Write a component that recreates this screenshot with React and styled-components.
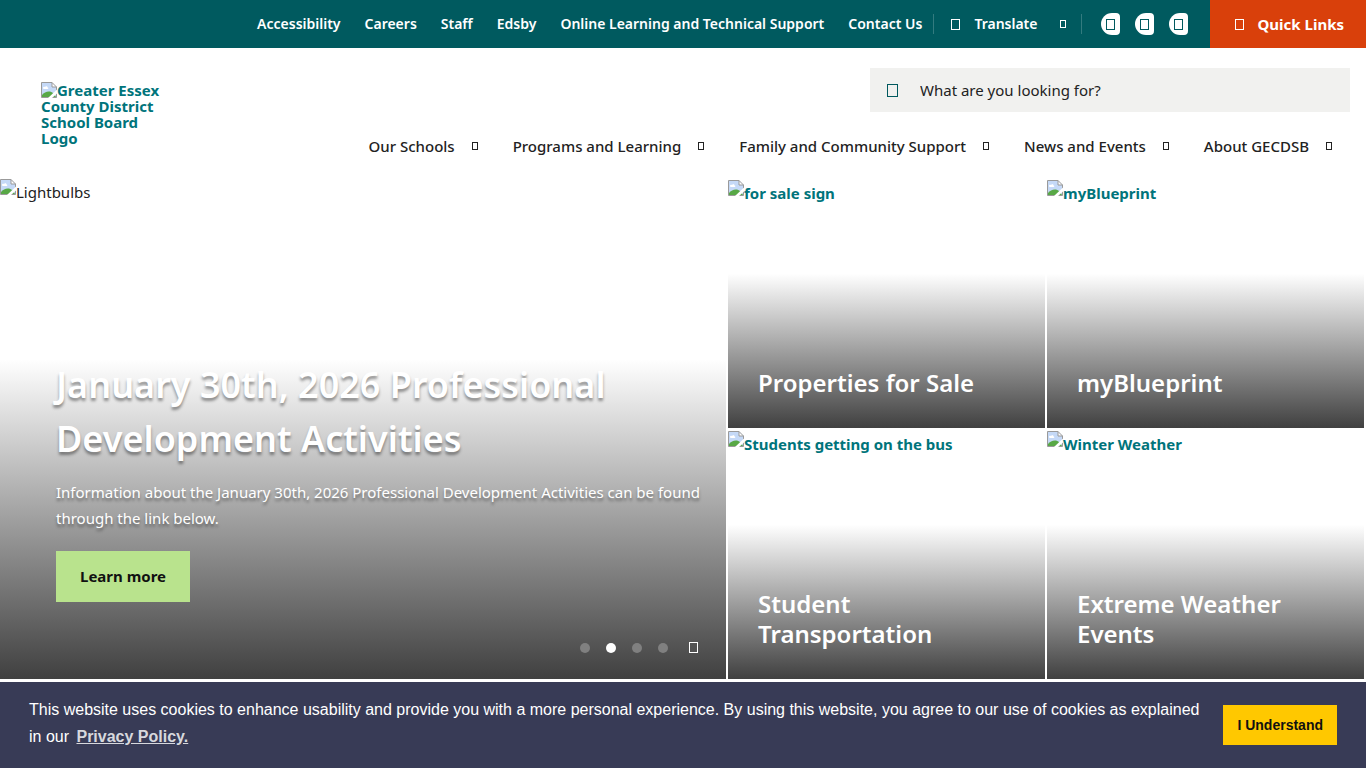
import React from "react";
import styled, { createGlobalStyle } from "styled-components";

const GlobalStyle = createGlobalStyle`
  *, *::before, *::after { box-sizing: border-box; }
  body {
    margin: 0;
    background: #fff;
    color: #222;
    font-family: "Noto Sans", "Open Sans", sans-serif;
    font-size: 15px;
    line-height: 26px;
  }
  button, input { font: inherit; color: inherit; }
  a { color: inherit; text-decoration: none; }
  h1, h2, p, ul { margin: 0; padding: 0; }
`;

const Page = styled.div`
  display: flex;
  flex-direction: column;
  min-height: 100vh;
`;

const TopBar = styled.div`
  display: flex;
  justify-content: flex-end;
  align-items: center;
  height: 48px;
  background: #005a5f;
  color: #fff;
  font-size: 14px;
  font-weight: 600;
`;

const TopLinks = styled.ul`
  display: flex;
  gap: 24px;
  padding-right: 11px;
  list-style: none;
  white-space: nowrap;
`;

const TranslateButton = styled.button`
  display: flex;
  align-items: center;
  height: 20px;
  padding: 0 15px 0 17px;
  border: solid #337b7f;
  border-width: 0 1px;
  background: none;
`;

const TranslateLabel = styled.span`
  margin: 0 22px 0 14px;
`;

const SocialLinks = styled.ul`
  display: flex;
  gap: 15px;
  padding: 0 22px 0 19px;
  list-style: none;
`;

const SocialLink = styled.a`
  display: flex;
  align-items: center;
  justify-content: center;
  width: 19px;
  height: 22px;
  overflow: hidden;
  border-radius: 11px 4px 4px 11px;
  background: #fff;
  color: #005a5f;
`;

const QuickLinks = styled.button`
  display: flex;
  align-items: center;
  gap: 14px;
  height: 48px;
  padding: 0 22px 0 25px;
  border: 0;
  background: #d9400b;
  font-size: 15px;
  font-weight: 700;
  white-space: nowrap;
`;

const Header = styled.header`
  display: flex;
  justify-content: space-between;
  padding: 20px 16px 20px 41px;
`;

const LogoLink = styled.a`
  width: 120px;
  height: 64px;
  margin-top: 14px;
  color: #00747b;
  font-weight: 700;
  line-height: 16px;
`;

const HeaderSide = styled.div`
  display: flex;
  flex-direction: column;
  align-items: flex-end;
  gap: 21px;
`;

const SearchBox = styled.label`
  display: flex;
  align-items: center;
  gap: 22px;
  width: 480px;
  height: 44px;
  padding: 0 17px;
  background: #f1f1ef;
  color: #00595e;
`;

const SearchInput = styled.input`
  flex: 1;
  min-width: 0;
  padding: 0;
  border: 0;
  outline: 0;
  background: none;
  color: #222;
  &::placeholder { color: #222; opacity: 1; }
`;

const MainNav = styled.nav`
  display: flex;
  gap: 35px;
  padding-right: 18px;
`;

const NavLink = styled.a`
  display: flex;
  align-items: center;
  gap: 17px;
  font-weight: 500;
  white-space: nowrap;
`;

const Banner = styled.main`
  display: grid;
  grid-template-columns: 726fr 317fr 317fr;
  grid-template-rows: repeat(2, minmax(249px, auto));
  gap: 2px;
  padding-right: 2px;
`;

const Slide = styled.section`
  display: flex;
  flex-direction: column;
  justify-content: space-between;
  grid-row: span 2;
  background: linear-gradient(to bottom, transparent 36%, #404040 100%);
`;

const SlideBody = styled.div`
  display: flex;
  flex-direction: column;
  align-items: flex-start;
  padding: 0 16px 26px 56px;
  color: #fff;
  text-shadow: 0 3px 3px rgba(0, 0, 0, 0.4);
`;

const SlideTitle = styled.h1`
  font-size: 36px;
  font-weight: 600;
  line-height: 54px;
`;

const SlideText = styled.p`
  margin: 13px 0 20px;
`;

const LearnMore = styled.a`
  padding: 12px 24px 13px;
  background: #b9e38d;
  color: #111;
  font-size: 15px;
  font-weight: 700;
  text-shadow: none;
`;

const SlideControls = styled.div`
  display: flex;
  align-items: center;
  align-self: flex-end;
  gap: 16px;
  margin-top: 40px;
  padding-right: 12px;
`;

const Dot = styled.button`
  width: 10px;
  height: 10px;
  padding: 0;
  border: 0;
  border-radius: 50%;
  background: ${({ $active }) => ($active ? "#fff" : "#808080")};
`;

const PauseButton = styled.button`
  display: flex;
  margin-left: 5px;
  padding: 0;
  border: 0;
  background: none;
`;

const Tile = styled.a`
  display: flex;
  flex-direction: column;
  justify-content: space-between;
  background: linear-gradient(to bottom, transparent 38%, #404040 100%);
`;

const TileTitle = styled.h2`
  padding: 0 30px 30px;
  color: #fff;
  font-size: 24px;
  font-weight: 600;
  line-height: 30px;
`;

const MissingImage = styled.span`
  display: flex;
  align-items: flex-start;
  padding-top: ${({ $link }) => ($link ? 1 : 0)}px;
  color: ${({ $link }) => ($link ? "#00747b" : "#222")};
  font-weight: ${({ $link }) => ($link ? 700 : 400)};
`;

const PictureIcon = styled.svg`
  flex: none;
  width: 16px;
  height: 16px;
  vertical-align: top;
`;

const GlyphBox = styled.span`
  display: block;
  flex: none;
  width: ${({ $size }) => ($size === "small" ? 6 : $size === "large" ? 11 : 9)}px;
  height: ${({ $size }) => ($size === "small" ? 8 : $size === "large" ? 13 : 11)}px;
  border: 1px solid currentColor;
`;

const CookieBar = styled.aside`
  display: flex;
  align-items: center;
  gap: 20px;
  margin-top: auto;
  padding: 14px 29px 18px;
  background: #383b56;
  color: #fff;
  font-family: "Liberation Sans", Arial, sans-serif;
  font-size: 16px;
  line-height: 27px;
`;

const CookieText = styled.p`
  flex: 1;
  a {
    margin-left: 3px;
    color: #d7d8dd;
    font-weight: 700;
    text-decoration: underline;
  }
`;

const AcceptButton = styled.button`
  height: 40px;
  margin-top: 4px;
  padding: 0 14px;
  border: 0;
  background: #ffc800;
  color: #111;
  font-size: 14px;
  font-weight: 700;
  white-space: nowrap;
`;

function BrokenPicture() {
  return (
    <PictureIcon viewBox="0 0 16 16" aria-hidden="true">
      <path d="M.5 .5H11l4.500 4.500v10.500H.5z" fill="#c5d9f7" />
      <path d="M2 6c0-1 1-1.500 2-1 .5-1.300 2.600-1 2.600.5 1 0 1 1.500 0 1.500H2.500z" fill="#fff" />
      <path d="M1 15v-2C3 10.500 6 9 9 9.500c2.500.5 4.500 2.500 6 5.500z" fill="#58a846" />
      <path d="M11 .5V5h4.500" fill="#fff" stroke="#9a9a9a" />
      <path d="M.5 .5H11l4.500 4.500v10.500H.5z" fill="none" stroke="#9a9a9a" />
      <path d="M16 7.500v4L11 16H7z" fill="#fff" />
    </PictureIcon>
  );
}

const topLinks = ["Accessibility", "Careers", "Staff", "Edsby", "Online Learning and Technical Support", "Contact Us"];
const navLinks = ["Our Schools", "Programs and Learning", "Family and Community Support", "News and Events", "About GECDSB"];
const tiles = [
  { alt: "for sale sign", title: "Properties for Sale" },
  { alt: "myBlueprint", title: "myBlueprint" },
  { alt: "Students getting on the bus", title: "Student Transportation" },
  { alt: "Winter Weather", title: "Extreme Weather Events" },
];

export default function App() {
  return (
    <Page>
      <GlobalStyle />
      <TopBar>
        <TopLinks>
          {topLinks.map((label) => (
            <li key={label}><a href="#">{label}</a></li>
          ))}
        </TopLinks>
        <TranslateButton type="button">
          <GlyphBox />
          <TranslateLabel>Translate</TranslateLabel>
          <GlyphBox $size="small" />
        </TranslateButton>
        <SocialLinks>
          {["Facebook", "Twitter", "Instagram"].map((name) => (
            <li key={name}>
              <SocialLink href="#" aria-label={name}><GlyphBox /></SocialLink>
            </li>
          ))}
        </SocialLinks>
        <QuickLinks type="button"><GlyphBox />Quick Links</QuickLinks>
      </TopBar>

      <Header>
        <LogoLink href="#"><BrokenPicture />Greater Essex County District School Board Logo</LogoLink>
        <HeaderSide>
          <SearchBox>
            <GlyphBox $size="large" />
            <SearchInput type="text" aria-label="Search" placeholder="What are you looking for?" />
          </SearchBox>
          <MainNav>
            {navLinks.map((label) => (
              <NavLink href="#" key={label}>{label}<GlyphBox $size="small" /></NavLink>
            ))}
          </MainNav>
        </HeaderSide>
      </Header>

      <Banner>
        <Slide>
          <MissingImage><BrokenPicture />Lightbulbs</MissingImage>
          <SlideBody>
            <SlideTitle>January 30th, 2026 Professional Development Activities</SlideTitle>
            <SlideText>
              Information about the January 30th, 2026 Professional Development Activities can be found through the link below.
            </SlideText>
            <LearnMore href="#">Learn more</LearnMore>
            <SlideControls>
              {[1, 2, 3, 4].map((n) => (
                <Dot key={n} type="button" aria-label={`Slide ${n}`} $active={n === 2} />
              ))}
              <PauseButton type="button" aria-label="Pause"><GlyphBox /></PauseButton>
            </SlideControls>
          </SlideBody>
        </Slide>
        {tiles.map(({ alt, title }) => (
          <Tile href="#" key={title}>
            <MissingImage $link><BrokenPicture />{alt}</MissingImage>
            <TileTitle>{title}</TileTitle>
          </Tile>
        ))}
      </Banner>

      <CookieBar>
        <CookieText>
          This website uses cookies to enhance usability and provide you with a more personal experience. By using this website, you agree to our use of cookies as explained in our <a href="#">Privacy Policy.</a>
        </CookieText>
        <AcceptButton type="button">I Understand</AcceptButton>
      </CookieBar>
    </Page>
  );
}
